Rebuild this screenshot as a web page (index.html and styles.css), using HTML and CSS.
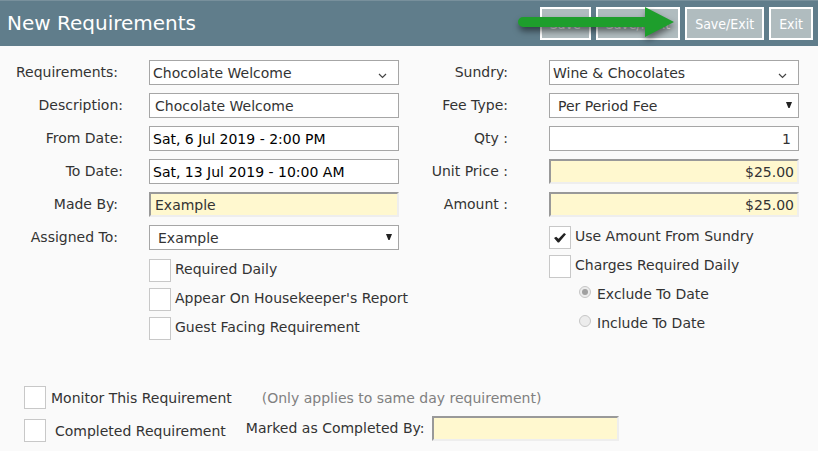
FILE: index.html
```html
<!DOCTYPE html>
<html lang="en">
<head>
<meta charset="utf-8">
<title>New Requirements</title>
<link rel="stylesheet" href="styles.css">
</head>
<body>
<header class="bar">
  <h1 class="title">New Requirements</h1>
  <div class="actions">
    <button type="button" class="btn">Save</button>
    <button type="button" class="btn">Save/Next</button>
    <button type="button" class="btn btn-spaced">Save/Exit</button>
    <button type="button" class="btn btn-spaced">Exit</button>
    <svg class="pointer" width="166" height="46" viewBox="0 0 166 46" aria-hidden="true">
      <path d="M10 17H132V7L161 22L132 37V27H10A5 5 0 0 1 10 17Z" fill="#1e9e2c"/>
    </svg>
  </div>
</header>
<form class="form">
  <div class="columns">
    <section class="col col-left">
      <div class="row">
        <label class="label label-near" for="req">Requirements:</label>
        <div class="pick">
          <select id="req" class="field combo"><option>Chocolate Welcome</option></select>
          <svg class="chevron" width="9" height="6" viewBox="0 0 9 6" aria-hidden="true"><path d="M1 1L4.500 4.500L8 1" fill="none" stroke="#444" stroke-width="1.200"/></svg>
        </div>
      </div>
      <div class="row">
        <label class="label" for="desc">Description:</label>
        <input id="desc" class="field" type="text" value="Chocolate Welcome">
      </div>
      <div class="row">
        <label class="label" for="from">From Date:</label>
        <input id="from" class="field date" type="text" value="Sat, 6 Jul 2019 - 2:00 PM">
      </div>
      <div class="row">
        <label class="label" for="to">To Date:</label>
        <input id="to" class="field date" type="text" value="Sat, 13 Jul 2019 - 10:00 AM">
      </div>
      <div class="row">
        <label class="label label-near" for="made">Made By:</label>
        <input id="made" class="field locked" type="text" value="Example" readonly>
      </div>
      <div class="row">
        <label class="label label-near" for="assigned">Assigned To:</label>
        <div class="pick">
          <select id="assigned" class="field list"><option>Example</option></select>
          <svg class="arrow" width="6" height="6" viewBox="0 0 6 6" aria-hidden="true"><path d="M0 0H6L3.600 6H2.400Z" fill="#222"/></svg>
        </div>
      </div>
      <div class="checks">
        <label class="check"><input type="checkbox" class="box">Required Daily</label>
        <label class="check"><input type="checkbox" class="box">Appear On Housekeeper's Report</label>
        <label class="check"><input type="checkbox" class="box">Guest Facing Requirement</label>
      </div>
    </section>
    <section class="col col-right">
      <div class="row">
        <label class="label" for="sundry">Sundry:</label>
        <div class="pick">
          <select id="sundry" class="field combo"><option>Wine &amp; Chocolates</option></select>
          <svg class="chevron" width="9" height="6" viewBox="0 0 9 6" aria-hidden="true"><path d="M1 1L4.500 4.500L8 1" fill="none" stroke="#444" stroke-width="1.200"/></svg>
        </div>
      </div>
      <div class="row">
        <label class="label" for="fee">Fee Type:</label>
        <div class="pick">
          <select id="fee" class="field list"><option>Per Period Fee</option></select>
          <svg class="arrow" width="6" height="6" viewBox="0 0 6 6" aria-hidden="true"><path d="M0 0H6L3.600 6H2.400Z" fill="#222"/></svg>
        </div>
      </div>
      <div class="row">
        <label class="label" for="qty">Qty :</label>
        <input id="qty" class="field number qty" type="text" value="1">
      </div>
      <div class="row">
        <label class="label" for="price">Unit Price :</label>
        <input id="price" class="field number locked" type="text" value="$25.00" readonly>
      </div>
      <div class="row">
        <label class="label" for="amount">Amount :</label>
        <input id="amount" class="field number locked" type="text" value="$25.00" readonly>
      </div>
      <div class="checks">
        <label class="check"><input type="checkbox" class="box" checked>Use Amount From Sundry</label>
        <label class="check"><input type="checkbox" class="box">Charges Required Daily</label>
        <label class="choice"><input type="radio" name="range" class="dot" checked disabled>Exclude To Date</label>
        <label class="choice"><input type="radio" name="range" class="dot" disabled>Include To Date</label>
      </div>
    </section>
  </div>
  <div class="status">
    <div class="status-row">
      <label class="check"><input type="checkbox" class="box">Monitor This Requirement</label>
      <span class="note">(Only applies to same day requirement)</span>
    </div>
    <div class="status-row">
      <label class="check check-wide"><input type="checkbox" class="box">Completed Requirement</label>
      <div class="completed">
        <label for="by">Marked as Completed By:</label>
        <input id="by" class="field locked by-field" type="text" readonly>
      </div>
    </div>
  </div>
</form>
</body>
</html>
```

FILE: styles.css
```css
* { box-sizing: border-box; }

body {
  margin: 0;
  background: #fafafa;
  color: #333;
  font: 14px/20px "DejaVu Sans", Verdana, sans-serif;
}

.bar {
  display: flex;
  align-items: center;
  justify-content: space-between;
  height: 46px;
  padding: 0 5px 0 7px;
  background: #607d8b;
  border-top: 1px solid #78909c;
}

.title {
  margin: 0;
  padding-bottom: 2px;
  color: #fff;
  font-size: 20px;
  font-weight: 400;
}

.actions {
  position: relative;
  display: flex;
  gap: 5px;
}

.btn {
  height: 33px;
  padding: 0 8px;
  border: 2px solid #fff;
  background: #b0bcbf;
  color: #fff;
  font: 14px/20px "DejaVu Sans Condensed", "DejaVu Sans", Tahoma, sans-serif;
}

.pointer {
  position: absolute;
  top: -7px;
  right: 134px;
  filter: drop-shadow(1px 4px 3px rgba(0, 0, 0, 0.5));
}

.form { padding: 14px 19px 8px 0; }

.columns { display: flex; align-items: flex-start; }

.col { display: flex; flex-direction: column; gap: 8px; min-width: 0; }
.col-left { flex: 1 1 149px; --label: 149px; }
.col-right { flex: 1 1 150px; --label: 150px; }

.row {
  display: grid;
  grid-template-columns: var(--label) 1fr;
  align-items: center;
}

.label {
  padding-right: 26px;
  text-align: right;
  line-height: 24px;
  align-self: start;
}

.label-near { padding-right: 31px; }
.col-right .label { padding-right: 41px; }

.pick { position: relative; display: flex; }

.field {
  width: 100%;
  min-width: 0;
  height: 25px;
  margin: 0;
  padding: 0 5px;
  border: 1px solid #a6a6a6;
  border-radius: 0;
  background: #fff;
  color: #333;
  font: inherit;
}

.combo, .list { appearance: none; }
.combo { padding: 0 3px; }
.list { padding: 0 8px; }
.date { padding: 0 3px; color: #000; }
.number { text-align: right; padding-right: 3px; }
.qty { padding-right: 7px; }

.locked {
  border: 2px solid;
  border-color: #999 #eee #eee #999;
  background: #fff8cf;
  padding: 0 4px;
}
.number.locked { padding-right: 3px; }

.chevron { position: absolute; right: 12px; top: 13px; }
.arrow { position: absolute; right: 7px; top: 9px; }

.checks {
  display: grid;
  gap: 6px;
  padding: 1px 0 0 var(--label);
}

.check {
  display: flex;
  align-items: center;
  gap: 4px;
  height: 23px;
  line-height: 20px;
  white-space: nowrap;
}

.checks .check { align-items: flex-start; }

.box {
  appearance: none;
  flex: none;
  display: grid;
  place-items: center;
  width: 22px;
  height: 23px;
  margin: 0;
  border: 1px solid #c8c8c8;
  background: #fff;
}

.box:checked::before {
  content: "";
  width: 12px;
  height: 10px;
  background: #222;
  clip-path: polygon(0 55%, 18% 42%, 38% 62%, 84% 4%, 100% 18%, 42% 100%, 32% 100%);
}

.choice {
  display: flex;
  align-items: flex-start;
  gap: 6px;
  height: 23px;
  padding-left: 30px;
  white-space: nowrap;
}

.dot {
  appearance: none;
  flex: none;
  display: grid;
  place-items: center;
  width: 12px;
  height: 12px;
  margin: 2px 0 0;
  border: 1px solid #c6c6c6;
  border-radius: 50%;
  background: #ececec;
}

.dot:checked::before {
  content: "";
  width: 6px;
  height: 6px;
  border-radius: 50%;
  background: #a0a0a0;
}

.status {
  display: grid;
  gap: 8px;
  margin-top: 45px;
  padding-left: 24px;
}

.status-row { display: flex; align-items: center; height: 25px; }
.status .check { gap: 5px; }
.status .check-wide { gap: 9px; }
.note { margin-left: 30px; color: #808080; }

.completed {
  display: flex;
  flex: 1;
  gap: 7px;
  align-self: flex-start;
  margin: -2px 0 0 20px;
  line-height: 25px;
  white-space: nowrap;
}

.by-field { flex: 0 1 187px; }
```
